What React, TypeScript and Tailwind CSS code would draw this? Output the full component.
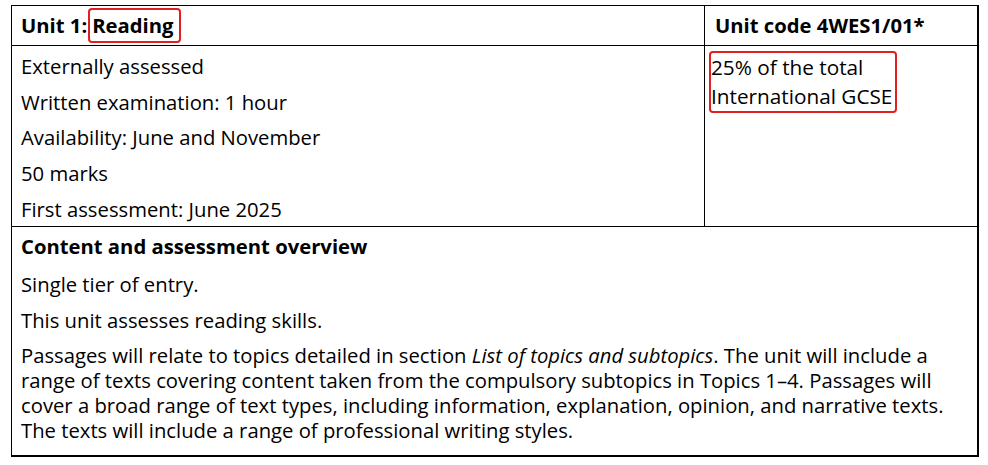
import React from 'react';

const font = { fontFamily: '"Open Sans", "Noto Sans", sans-serif' };

const details = [
  'Externally assessed',
  'Written examination: 1 hour',
  'Availability: June and November',
  '50 marks',
  'First assessment: June 2025',
];

const App = () => {
  return (
    <div className="min-h-[465px] w-[988px] bg-white pt-[5px] pl-[11px] text-black" style={font}>
      <div className="w-[968px] border border-black border-b-2 border-r-2">
        {/* header row */}
        <div className="flex h-[40px] border-b border-black">
          <div className="flex w-[693px] items-center border-r border-black pl-[9px] text-[20.25px] font-bold">
            <span>Unit 1:</span>
            <span className="ml-[1px] rounded-[4px] border-2 border-[#e02020] pl-[2px] pr-[5px] leading-[31px]">
              Reading
            </span>
          </div>
          <div className="flex flex-1 items-center pl-[10px] text-[20.25px] font-bold">Unit code 4WES1/01*</div>
        </div>

        {/* details row */}
        <div className="flex h-[181px] border-b border-black">
          <div className="w-[693px] border-r border-black pl-[9px] pt-[7px] text-[20.25px]">
            {details.map((d) => (
              <p key={d} className="mb-[9.7px] leading-[26px]">
                {d}
              </p>
            ))}
          </div>
          <div className="flex-1 pl-[4px] pt-[5px]">
            <div className="inline-block rounded-[4px] border-2 border-[#e02020] pr-[3px] text-[20.75px] leading-[29px]">
              25% of the total
              <br />
              International GCSE
            </div>
          </div>
        </div>

        {/* overview */}
        <div className="h-[228px] pl-[9px] pr-[8px] pt-[6px] text-[20.25px]">
          <p className="mb-[12px] font-bold leading-[26px]">Content and assessment overview</p>
          <p className="mb-[10px] leading-[26px]">Single tier of entry.</p>
          <p className="mb-[10px] leading-[26px]">This unit assesses reading skills.</p>
          <p className="leading-[25px]">
            Passages will relate to topics detailed in section <em>List of topics and subtopics</em>. The unit will
            include a range of texts covering content taken from the compulsory subtopics in Topics 1–4. Passages
            will cover a broad range of text types, including information, explanation, opinion, and narrative
            texts. The texts will include a range of professional writing styles.
          </p>
        </div>
      </div>
    </div>
  );
};

export default App;
